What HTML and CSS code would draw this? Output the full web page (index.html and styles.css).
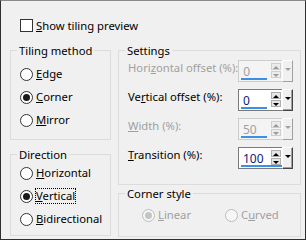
FILE: index.html
```html
<!DOCTYPE html>
<html>
<head>
<meta charset="utf-8">
<link rel="stylesheet" href="styles.css">
</head>
<body>
<div class="window">
  <label class="check-row">
    <span class="checkbox"></span>
    <span class="text"><u>S</u>how tiling preview</span>
  </label>
  <div class="columns">
    <div class="col left">
      <fieldset class="group tiling">
        <legend>Tiling method</legend>
        <div class="inner">
          <div class="radio-row"><span class="radio"></span><span class="text"><u>E</u>dge</span></div>
          <div class="radio-row"><span class="radio checked"></span><span class="text"><u>C</u>orner</span></div>
          <div class="radio-row"><span class="radio"></span><span class="text"><u>M</u>irror</span></div>
        </div>
      </fieldset>
      <fieldset class="group direction">
        <legend>Direction</legend>
        <div class="inner">
          <div class="radio-row"><span class="radio"></span><span class="text"><u>H</u>orizontal</span></div>
          <div class="radio-row"><span class="radio checked"></span><span class="text focus"><u>V</u>ertical</span></div>
          <div class="radio-row"><span class="radio"></span><span class="text"><u>B</u>idirectional</span></div>
        </div>
      </fieldset>
    </div>
    <div class="col right">
      <fieldset class="group settings">
        <legend>Settings</legend>
        <div class="inner">
          <div class="field disabled">
            <span class="label">Hori<u>z</u>ontal offset (%):</span>
            <div class="spin">
              <div class="value">0<span class="bar short"></span></div>
              <div class="arrows"><span class="up"></span><span class="down"></span></div>
              <div class="drop"><span class="tri"></span></div>
            </div>
          </div>
          <div class="field">
            <span class="label">Ve<u>r</u>tical offset (%):</span>
            <div class="spin">
              <div class="value">0<span class="bar short"></span></div>
              <div class="arrows"><span class="up"></span><span class="down"></span></div>
              <div class="drop"><span class="tri"></span></div>
            </div>
          </div>
          <div class="field disabled">
            <span class="label"><u>W</u>idth (%):</span>
            <div class="spin">
              <div class="value">50<span class="bar short"></span></div>
              <div class="arrows"><span class="up"></span><span class="down"></span></div>
              <div class="drop"><span class="tri"></span></div>
            </div>
          </div>
          <div class="field">
            <span class="label"><u>T</u>ransition (%):</span>
            <div class="spin">
              <div class="value">100<span class="bar full"></span></div>
              <div class="arrows"><span class="up"></span><span class="down"></span></div>
              <div class="drop"><span class="tri"></span></div>
            </div>
          </div>
        </div>
      </fieldset>
      <fieldset class="group corner">
        <legend>Corner style</legend>
        <div class="inner">
          <div class="radio-row disabled linear"><span class="radio checked"></span><span class="text"><u>L</u>inear</span></div>
          <div class="radio-row disabled"><span class="radio"></span><span class="text">C<u>u</u>rved</span></div>
        </div>
      </fieldset>
    </div>
  </div>
</div>
</body>
</html>
```

FILE: styles.css
```css
* { box-sizing: border-box; }
html, body { margin: 0; padding: 0; }
body {
  width: 306px;
  height: 240px;
  font-family: "Noto Sans", "Open Sans", sans-serif;
  font-size: 11.25px;
  color: #000;
}
u { text-decoration: underline; text-underline-offset: 1px; }
.window {
  width: 306px;
  height: 240px;
  background: #f0f0f0;
  border: 1px solid #2f2f2f;
  border-top-color: #8a8a8a;
  padding: 18px 0 0 9px;
  display: flex;
  flex-direction: column;
}
.check-row {
  display: flex;
  align-items: center;
  height: 13px;
  margin-left: 10px;
  gap: 3px;
}
.checkbox {
  width: 13px;
  height: 13px;
  border: 1px solid #333;
  background: #fff;
}
.text { line-height: 16px; white-space: nowrap; }
.columns {
  display: flex;
  gap: 7px;
  margin-top: 11px;
}
.col { display: flex; flex-direction: column; }
.left { width: 101px; gap: 7px; }
.right { width: 183px; gap: 1px; }
fieldset.group {
  margin: 0;
  border: 1px solid #dcdcdc;
  padding: 0;
  min-width: 0;
}
legend {
  padding: 0 2px;
  margin-left: 6px;
  line-height: 15px;
  height: 15px;
  white-space: nowrap;
}
.tiling { height: 97px; }
.tiling .inner { padding: 5px 0 0 9px; }
.direction { height: 89px; }
.direction .inner { padding: 0 0 0 9px; }
.radio-row {
  display: flex;
  align-items: flex-start;
  gap: 3px;
  height: 23px;
  padding-top: 5px;
}
.radio-row .text { margin-top: -2px; }
.radio {
  width: 13px;
  height: 13px;
  border-radius: 50%;
  border: 1px solid #333;
  background: #fff;
  display: flex;
  align-items: center;
  justify-content: center;
  flex: none;
}
.radio.checked::after {
  content: "";
  width: 7px;
  height: 7px;
  border-radius: 50%;
  background: #1a1a1a;
}
.text.focus { outline: 1px dotted #000; outline-offset: -1px; padding: 0 1px; margin-left: -1px; }
.radio-row.disabled { color: #a0a0a0; }
.radio-row.disabled .radio { border-color: #bcbcbc; background: #f6f6f6; }
.radio-row.disabled .radio.checked::after { background: #c4c4c4; }

.settings { height: 142px; }
.settings .inner {
  padding: 2px 7px 0 9px;
  display: flex;
  flex-direction: column;
  gap: 7px;
}
.field {
  display: flex;
  align-items: flex-start;
  justify-content: space-between;
  height: 22px;
}
.field .label { white-space: nowrap; line-height: 16px; }
.field.disabled .label { color: #a0a0a0; }
.spin {
  display: flex;
  width: 55px;
  height: 22px;
  border: 1px solid #7a7a7a;
  background: #fff;
  padding: 1px;
}
.field.disabled .spin { border-color: #cccccc; background: #f4f4f4; }
.value {
  position: relative;
  flex: 1;
  color: #10207a;
  padding: 2px 0 0 3px;
  line-height: 15px;
  font-size: 12px;
}
.field.disabled .value { color: #a0a0a0; }
.bar {
  position: absolute;
  left: 1px;
  bottom: 0;
  height: 2px;
  background: #3c8fe6;
}
.bar.short { width: 26px; }
.bar.full { width: 52px; }
.arrows {
  width: 10px;
  display: flex;
  flex-direction: column;
  gap: 1px;
  padding: 1px 0 2px;
  margin-right: 1px;
}
.arrows span {
  flex: 1;
  border: 1px solid #adadad;
  background: #e6e6e6;
  position: relative;
}
.field.disabled .arrows span { border-color: #cfcfcf; background: #ececec; }
.arrows .up::after, .arrows .down::after {
  content: "";
  position: absolute;
  left: 1px;
  border-left: 3px solid transparent;
  border-right: 3px solid transparent;
}
.arrows .up::after { top: 2px; border-bottom: 3px solid #000; }
.arrows .down::after { top: 2px; border-top: 3px solid #000; }
.field.disabled .arrows .up::after { border-bottom-color: #9a9a9a; }
.field.disabled .arrows .down::after { border-top-color: #9a9a9a; }
.drop {
  width: 11px;
  margin: -2px -2px -2px 0;
  background: #f0f0f0;
  border-left: 1px solid #fff;
  border-top: 1px solid #fff;
  border-right: 1px solid #444;
  border-bottom: 1px solid #444;
  box-shadow: inset -1px -1px 0 #a0a0a0;
  position: relative;
}
.drop .tri {
  position: absolute;
  left: 2px;
  top: 7px;
  border-left: 3px solid transparent;
  border-right: 3px solid transparent;
  border-top: 3px solid #000;
}
.field.disabled .drop .tri { border-top-color: #a0a0a0; }
.field.disabled .drop { border-right-color: #a0a0a0; border-bottom-color: #a0a0a0; box-shadow: none; }

.corner { height: 51px; }
.corner .inner { display: flex; padding: 3px 0 0 23px; }
.corner .linear { width: 83px; }
```
